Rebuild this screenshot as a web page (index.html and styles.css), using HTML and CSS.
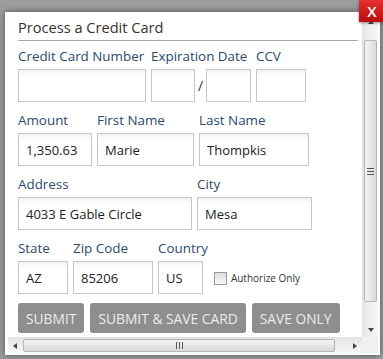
FILE: index.html
```html
<!DOCTYPE html>
<html lang="en">
<head>
  <meta charset="UTF-8">
  <title>Process a Credit Card</title>
  <link rel="stylesheet" href="styles.css">
</head>
<body>

  <div class="dialog">
    <button class="close-btn">X</button>
    <div class="pane">
      <div class="content">
        <h2 class="title">Process a Credit Card</h2>
        <form class="card-form">
          <div class="row">
            <div class="field">
              <label>Credit Card Number</label>
              <input type="text" class="w-card">
            </div>
            <div class="field">
              <label>Expiration Date</label>
              <div class="exp">
                <input type="text" class="w-month">
                <span class="slash">/</span>
                <input type="text" class="w-year">
              </div>
            </div>
            <div class="field">
              <label>CCV</label>
              <input type="text" class="w-ccv">
            </div>
          </div>

          <div class="row">
            <div class="field">
              <label>Amount</label>
              <input type="text" class="w-amount" value="1,350.63">
            </div>
            <div class="field">
              <label>First Name</label>
              <input type="text" class="w-first" value="Marie">
            </div>
            <div class="field">
              <label>Last Name</label>
              <input type="text" class="w-last" value="Thompkis">
            </div>
          </div>

          <div class="row">
            <div class="field">
              <label>Address</label>
              <input type="text" class="w-address" value="4033 E Gable Circle">
            </div>
            <div class="field">
              <label>City</label>
              <input type="text" class="w-city" value="Mesa">
            </div>
          </div>

          <div class="row">
            <div class="field">
              <label>State</label>
              <input type="text" class="w-state" value="AZ">
            </div>
            <div class="field">
              <label>Zip Code</label>
              <input type="text" class="w-zip" value="85206">
            </div>
            <div class="field">
              <label>Country</label>
              <input type="text" class="w-country" value="US">
            </div>
            <label class="check">
              <span class="box"></span>
              Authorize Only
            </label>
          </div>

          <div class="actions">
            <button type="button" class="btn">Submit</button>
            <button type="button" class="btn">Submit &amp; Save Card</button>
            <button type="button" class="btn">Save Only</button>
          </div>
        </form>
      </div>

      <!-- fake scrollbars -->
      <div class="vscroll">
        <span class="arrow up"></span>
        <div class="track">
          <div class="thumb v-thumb"><span class="grip"></span></div>
        </div>
        <span class="arrow down"></span>
      </div>
      <div class="hscroll">
        <span class="arrow left"></span>
        <div class="track">
          <div class="thumb h-thumb"><span class="grip"></span></div>
        </div>
        <span class="arrow right"></span>
      </div>
      <div class="corner"></div>
    </div>
  </div>

</body>
</html>
```

FILE: styles.css
```css
/* General Styles */
body {
  margin: 0;
  padding: 0;
  height: 359px;
  overflow: hidden;
  font-family: 'Open Sans', sans-serif;
  background: #9d9d9d;
}

.dialog {
  position: relative;
  margin: 12px 0 0 5px;
  width: 375px;
  height: 343px;
  background: #fff;
  box-shadow: 0 0 7px rgba(0, 0, 0, 0.5);
}

.close-btn {
  position: absolute;
  top: -12px;
  right: -5px;
  width: 26px;
  height: 22px;
  padding: 0;
  border: none;
  background: linear-gradient(#e83030, #b80c0c);
  color: #fff;
  font-family: 'Open Sans', sans-serif;
  font-size: 15px;
  font-weight: 600;
  line-height: 22px;
  box-shadow: 0 1px 3px rgba(0, 0, 0, 0.4);
  z-index: 2;
}

.pane {
  display: grid;
  grid-template-columns: 1fr 16px;
  grid-template-rows: 1fr 16px;
  height: 100%;
  box-sizing: border-box;
  padding: 3px 2px 2px 3px;
}

.content {
  overflow: hidden;
  padding: 0 0 0 10px;
}

.title {
  margin: 2px 4px 0 0;
  padding-bottom: 3px;
  border-bottom: 1px solid #a8a8a8;
  font-size: 14.6px;
  font-weight: 400;
  line-height: 20px;
  color: #3a302b;
}

.card-form {
  margin-top: 6px;
}

.row {
  display: flex;
  align-items: flex-end;
  gap: 5px;
  margin-bottom: 9px;
}

.field {
  display: flex;
  flex-direction: column;
}

.field label {
  font-size: 13.4px;
  line-height: 18px;
  color: #2b4a6a;
  margin-bottom: 4px;
  white-space: nowrap;
}

input[type="text"] {
  box-sizing: border-box;
  height: 33px;
  margin: 0;
  padding: 0 7px;
  border: 1px solid #c6c6c6;
  background: linear-gradient(#f2f2f2, #fff 6px);
  font-family: 'Open Sans', sans-serif;
  font-size: 13px;
  color: #222;
  outline: none;
}

.w-card { width: 128px; }
.w-month { width: 44px; }
.w-year { width: 45px; }
.w-ccv { width: 50px; }
.w-amount { width: 74px; }
.w-first { width: 97px; }
.w-last { width: 110px; }
.w-address { width: 174px; }
.w-city { width: 115px; }
.w-state { width: 50px; }
.w-zip { width: 80px; }
.w-country { width: 45px; }

.exp {
  display: flex;
  align-items: center;
}

.slash {
  width: 11px;
  text-align: center;
  font-size: 14px;
  color: #333;
}

.check {
  display: flex;
  align-items: center;
  gap: 4px;
  margin: 0 0 9px 1px;
  font-size: 10px;
  color: #333;
}

.box {
  width: 11px;
  height: 11px;
  border: 1px solid #9a9a9a;
  background: linear-gradient(#dcdcdc, #f8f8f8);
}

.actions {
  display: flex;
  gap: 6px;
}

.btn {
  height: 30px;
  padding: 0 8px;
  border: none;
  border-radius: 3px;
  background: #8e8e8e;
  color: #ececec;
  font-family: 'Open Sans', sans-serif;
  font-size: 13.8px;
  text-transform: uppercase;
}

/* Scrollbars */
.vscroll,
.hscroll {
  display: flex;
  background: linear-gradient(90deg, #e6e6e6, #f6f6f6);
}

.vscroll {
  flex-direction: column;
  border-left: 1px solid #e2e2e2;
}

.hscroll {
  background: linear-gradient(#e6e6e6, #f6f6f6);
  border-top: 1px solid #e2e2e2;
}

.corner {
  background: #f0f0f0;
}

.track {
  flex: 1;
  display: flex;
  padding: 1px;
}

.vscroll .track {
  flex-direction: column;
}

.thumb {
  display: flex;
  align-items: center;
  justify-content: center;
  box-sizing: border-box;
  border: 1px solid #b4b4b4;
  border-radius: 2px;
}

.v-thumb {
  height: 262px;
  margin-top: 10px;
  background: linear-gradient(90deg, #f4f4f4, #dadada);
}

.h-thumb {
  width: 312px;
  background: linear-gradient(#f4f4f4, #dadada);
}

.v-thumb .grip {
  width: 7px;
  height: 7px;
  background: repeating-linear-gradient(#555 0 1px, transparent 1px 3px);
}

.h-thumb .grip {
  width: 7px;
  height: 7px;
  background: repeating-linear-gradient(90deg, #555 0 1px, transparent 1px 3px);
}

.arrow {
  flex: 0 0 14px;
  display: flex;
  align-items: center;
  justify-content: center;
}

.arrow::before {
  content: "";
  border: 3px solid transparent;
}

.arrow.up::before { border-bottom: 4px solid #444; border-top: 0; }
.arrow.down::before { border-top: 4px solid #444; border-bottom: 0; }
.arrow.left::before { border-right: 4px solid #444; border-left: 0; }
.arrow.right::before { border-left: 4px solid #444; border-right: 0; }
```
